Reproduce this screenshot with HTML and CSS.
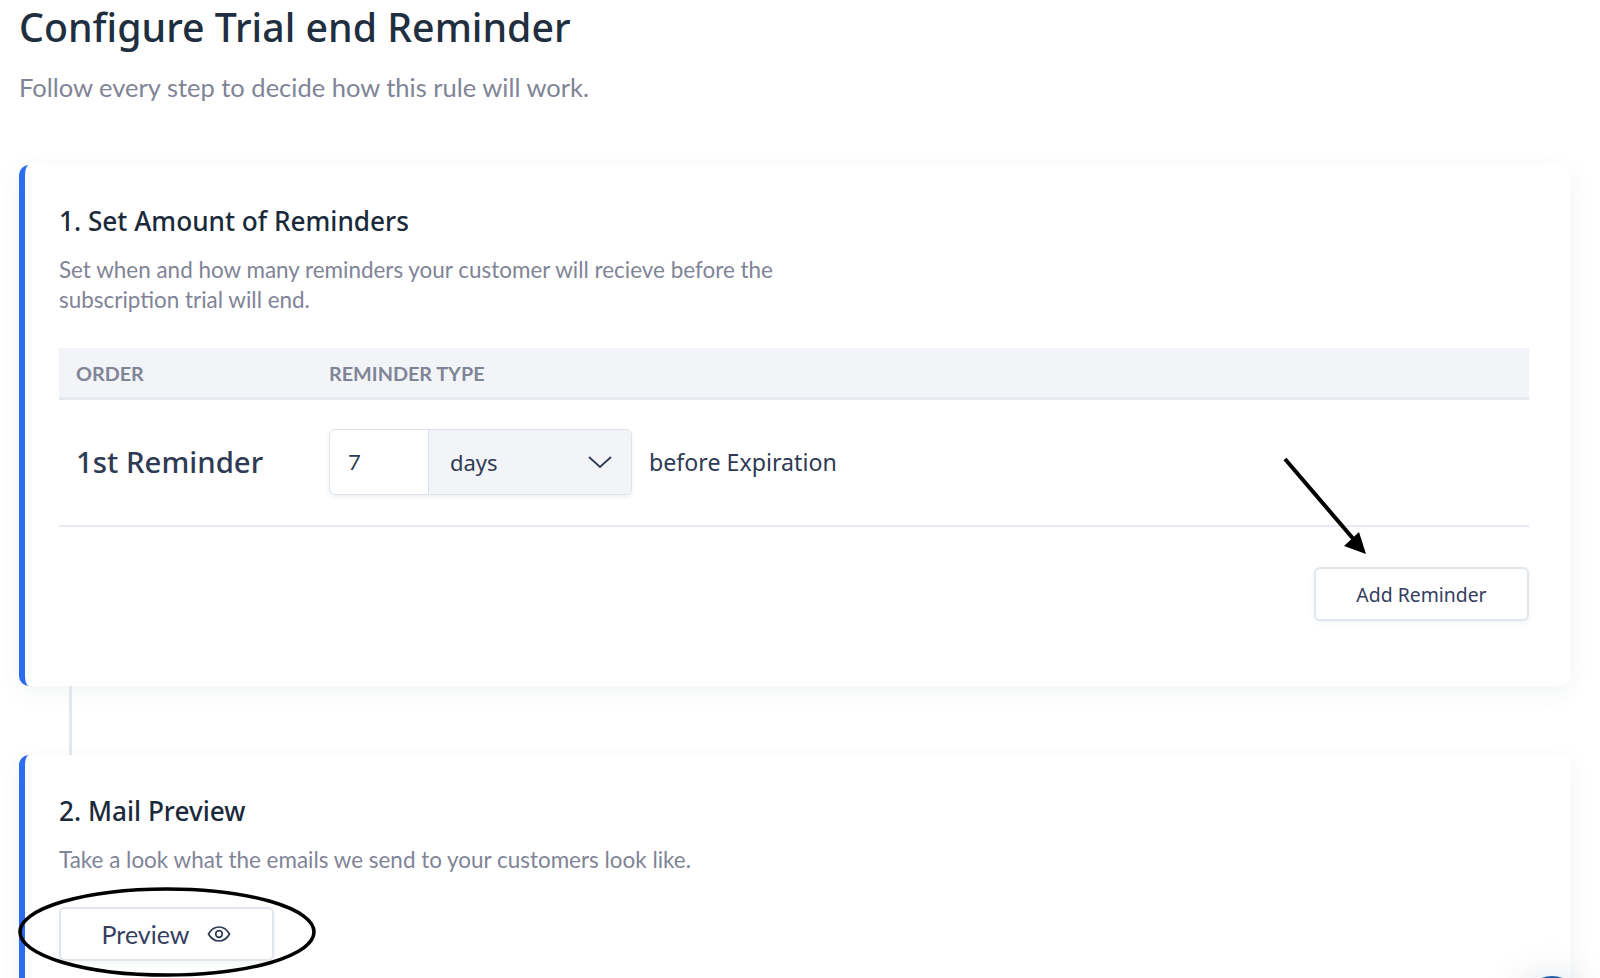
FILE: index.html
```html
<!DOCTYPE html>
<html lang="en">
<head>
    <meta charset="UTF-8">
    <meta name="viewport" content="width=device-width, initial-scale=1.0">
    <title>Configure Trial end Reminder</title>
    <link rel="stylesheet" href="styles.css">
</head>
<body>

    <div class="page">
        <h1 class="page-title">Configure Trial end Reminder</h1>
        <p class="page-sub">Follow every step to decide how this rule will work.</p>

        <!-- Step 1 -->
        <section class="card">
            <h2 class="card-title">1. Set Amount of Reminders</h2>
            <p class="card-text card-text-narrow">Set when and how many reminders your customer will recieve before the subscription trial will end.</p>

            <div class="table-head">
                <span class="col-order">ORDER</span>
                <span>REMINDER TYPE</span>
            </div>
            <div class="table-row">
                <span class="col-order row-name">1st Reminder</span>
                <div class="amount">
                    <span class="amount-value">7</span>
                    <span class="amount-unit">
                        days
                        <svg class="chevron" width="24" height="12" viewBox="0 0 24 12"><path d="M1 1l11 10L23 1" fill="none" stroke="#2f3a55" stroke-width="1.8"/></svg>
                    </span>
                </div>
                <span class="row-after">before Expiration</span>
            </div>
            <div class="card-actions">
                <button class="btn btn-add">Add Reminder</button>
            </div>
        </section>

        <div class="connector"></div>

        <!-- Step 2 -->
        <section class="card card-last">
            <h2 class="card-title">2. Mail Preview</h2>
            <p class="card-text">Take a look what the emails we send to your customers look like.</p>
            <button class="btn btn-preview">
                Preview
                <svg width="24" height="18" viewBox="0 0 24 18"><path d="M1.5 9C4 4.5 7.5 2 12 2s8 2.500 10.500 7C20 13.500 16.500 16 12 16S4 13.500 1.500 9z" fill="none" stroke="#2f3a55" stroke-width="1.7"/><circle cx="12" cy="9" r="3.300" fill="none" stroke="#2f3a55" stroke-width="1.700"/></svg>
            </button>
        </section>
    </div>

    <!-- Annotations drawn over the screenshot -->
    <svg class="marks" width="1600" height="978" viewBox="0 0 1600 978">
        <path d="M1285 459L1356 542" stroke="#000" stroke-width="4" fill="none"/>
        <path d="M1366 554L1344 546L1359 532z" fill="#000"/>
        <ellipse cx="167" cy="932" rx="147" ry="43" fill="none" stroke="#000" stroke-width="3.600"/>
    </svg>

    <div class="chat-bubble"></div>

</body>
</html>
```

FILE: styles.css
```css
html, body {
    margin: 0;
    height: 978px;
    overflow: hidden;
    background-color: #fff;
}
body {
    font-family: Lato, "Open Sans", sans-serif;
    color: #1f2d3d;
    position: relative;
}
.page {
    padding: 0 30px 0 19px;
}
.page-title {
    margin: 0;
    padding-top: 4px;
    font-family: "Noto Sans", sans-serif;
    font-size: 39.300px;
    line-height: 46px;
    font-weight: 500;
    color: #1f2f40;
}
.page-sub {
    margin: 20px 0 0;
    font-size: 25.500px;
    line-height: 34px;
    color: #7f8497;
}
.card {
    margin-top: 61px;
    height: 521px;
    box-sizing: border-box;
    padding: 40px 41px 0 34px;
    background-color: #fff;
    border-left: 6px solid #2b6cf0;
    border-radius: 10px;
    box-shadow: 0 6px 24px rgba(40, 60, 90, 0.06);
}
.card-last {
    margin-top: 0;
    height: 400px;
}
.card-title {
    margin: 0;
    font-family: "Noto Sans", sans-serif;
    font-size: 26.200px;
    line-height: 32px;
    font-weight: 500;
    color: #1b2a3b;
}
.card-text {
    margin: 18px 0 0;
    font-size: 22.450px;
    line-height: 30px;
    color: #7f8497;
}
.card-text-narrow {
    max-width: 780px;
}
.table-head {
    display: flex;
    align-items: center;
    margin-top: 33px;
    height: 49px;
    padding-left: 17px;
    background-color: #f3f4f8;
    border-bottom: 3px solid #e6e9ef;
    font-size: 19.800px;
    font-weight: 700;
    color: #7f8497;
}
.col-order {
    width: 253px;
}
.table-row {
    display: flex;
    align-items: center;
    height: 127px;
    box-sizing: border-box;
    padding: 0 0 2px 17px;
    border-bottom: 2px solid #e6e9ef;
}
.row-name {
    font-family: "Noto Sans", sans-serif;
    font-size: 29.400px;
    font-weight: 500;
    color: #2f3a55;
}
.amount {
    display: flex;
    width: 303px;
    height: 66px;
    box-sizing: border-box;
    border: 1px solid #dde3ea;
    border-radius: 6px;
    box-shadow: 0 2px 4px rgba(40, 60, 90, 0.08);
    overflow: hidden;
    font-size: 22px;
    color: #2f3a55;
}
.amount-value {
    display: flex;
    align-items: center;
    width: 99px;
    padding-left: 18px;
    box-sizing: border-box;
    border-right: 1px solid #dde3ea;
}
.amount-unit {
    display: flex;
    flex: 1;
    align-items: center;
    justify-content: space-between;
    padding: 0 19px 0 21px;
    background-color: #f3f4f8;
    font-family: "Noto Sans", sans-serif;
}
.row-after {
    margin-left: 17px;
    font-family: "Noto Sans", sans-serif;
    font-size: 23.200px;
    color: #2f3a55;
}
.card-actions {
    display: flex;
    justify-content: flex-end;
    margin-top: 40px;
}
.btn {
    display: flex;
    align-items: center;
    justify-content: center;
    box-sizing: border-box;
    height: 54px;
    background-color: #fff;
    border: 2px solid #e1e6ec;
    border-radius: 6px;
    box-shadow: 0 2px 5px rgba(40, 60, 90, 0.06);
    color: #343e60;
    cursor: pointer;
}
.btn-add {
    width: 215px;
    font-family: "Noto Sans", sans-serif;
    font-size: 19.400px;
}
.btn-preview {
    gap: 18px;
    width: 215px;
    margin-top: 32px;
    font-family: Lato, sans-serif;
    font-size: 25px;
}
.connector {
    width: 3px;
    height: 69px;
    margin-left: 50px;
    background-color: #e3e8ee;
}
.marks {
    position: absolute;
    top: 0;
    left: 0;
    pointer-events: none;
}
.chat-bubble {
    position: absolute;
    left: 1522px;
    top: 976px;
    width: 60px;
    height: 60px;
    border-radius: 50%;
    background-color: #2a5db0;
    box-shadow: 0 0 40px rgba(40, 60, 90, 0.15);
}
```
